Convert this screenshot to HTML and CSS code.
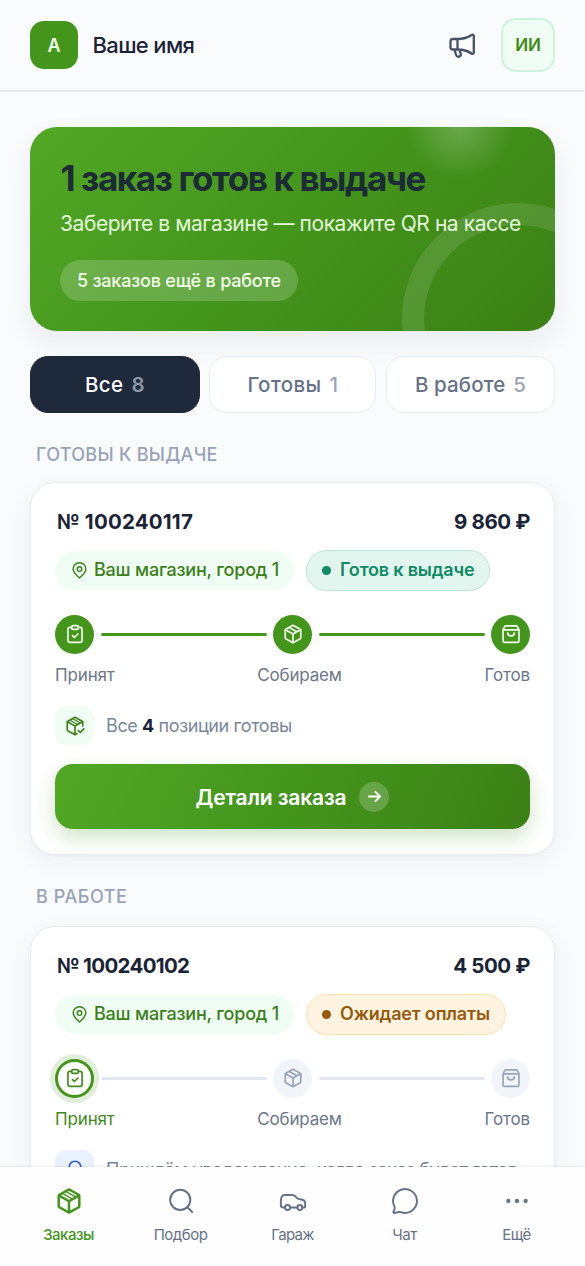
FILE: index.html
```
<!DOCTYPE html>
<html lang="ru">
<head>
<meta charset="utf-8">
<title>Заказы</title>
<link rel="stylesheet" href="styles.css">
</head>
<body>
<svg class="sprite" aria-hidden="true">
  <symbol id="clipboard" viewBox="0 0 24 24"><path d="M8 4H6A2.500 2.500 0 0 0 3.500 6.500V19.500A2.500 2.500 0 0 0 6 22h12a2.500 2.500 0 0 0 2.500-2.500V6.500A2.500 2.500 0 0 0 18 4H16"/><rect x="8" y="2" width="8" height="4.500" rx="1.800"/><path d="M9 14l2.200 2.200L15.500 12"/></symbol>
  <symbol id="box" viewBox="0 0 24 24"><path d="M12 1.500l8.700 4.800c.4.200.6.500.6 1v9.300c0 .5-.2.800-.6 1L12 22.500l-8.700-4.900c-.4-.2-.6-.5-.6-1V7.300c0-.5.2-.8.600-1z"/><path d="M3 7l9 5 9-5M12 12v10M7.500 4.200l9 5"/></symbol>
  <symbol id="box-striped" viewBox="0 0 24 24"><path d="M12 1.300l8.900 4.900c.4.200.6.500.6 1v9.600c0 .5-.2.800-.6 1L12 22.700l-8.900-4.900c-.4-.2-.6-.5-.6-1V7.200c0-.5.2-.8.600-1z"/><path d="M3 7l9 5.200 9-5.200M12 12.200v10"/><path class="thin" d="M9.300 3.300l8.700 4.900M6 5l8.800 5"/></symbol>
  <symbol id="box-check" viewBox="0 0 24 24"><path d="M21.300 12V7.300c0-.5-.2-.8-.6-1L12 1.500 3.300 6.300c-.4.200-.6.500-.6 1v9.300c0 .5.2.8.600 1L12 22.500l2.300-1.300"/><path d="M3 7l9 5 9-5M12 12v10M16 17.500l2.300 2.300 4.300-4.300"/><path class="thin" d="M9.300 3.300l8.700 4.900M6 5l8.800 5"/></symbol>
  <symbol id="bag" viewBox="0 0 24 24"><path d="M2.500 6.500L5 2.300h14L21.500 6.500V20a2 2 0 0 1-2 2h-15a2 2 0 0 1-2-2zM2.500 7h19M8 10.500c0 5 8 5 8 0"/></symbol>
  <symbol id="pin" viewBox="0 0 24 24"><path d="M12 22.500C8 19 3 15 3 10a9 9 0 0 1 18 0c0 5-5 9-9 12.500z"/><circle cx="12" cy="10" r="3.200"/></symbol>
</svg>

<header class="topbar">
  <div class="logo">А</div>
  <div class="name">Ваше имя</div>
  <svg class="megaphone" viewBox="0 0 28 28"><path d="M9.500 8h-4.500A2.500 2.500 0 0 0 2.500 10.500v5.500A2.500 2.500 0 0 0 5 18.500h4.500zM9.500 8c5.500 0 10-1.200 14-4 1-.7 2.300-.2 2.300 1v16.500c0 1.200-1.300 1.700-2.300 1-4-2.800-8.500-4-14-4M6.500 18.500l1.500 5.200c.5 1.600 1.600 2.300 3 2s2.200-1.500 1.700-3L11.500 18.700"/></svg>
  <div class="avatar">ИИ</div>
</header>

<main class="content">
  <section class="banner">
    <div class="glow"></div><div class="ring"></div>
    <h1 class="banner-title">1 заказ готов к выдаче</h1>
    <p class="banner-text">Заберите в магазине — покажите QR на кассе</p>
    <span class="banner-pill">5 заказов ещё в работе</span>
  </section>

  <div class="tabs">
    <div class="tab active"><span class="t-all">Все</span><span class="count">8</span></div>
    <div class="tab"><span class="t-ready">Готовы</span><span class="count">1</span></div>
    <div class="tab"><span class="t-work">В работе</span><span class="count">5</span></div>
  </div>

  <h2 class="section-title">ГОТОВЫ К ВЫДАЧЕ</h2>
  <article class="card">
    <div class="card-head"><span class="num-a">№ 100240117</span><span class="price">9 860 ₽</span></div>
    <div class="chips">
      <span class="shop"><svg class="i-pin"><use href="#pin"/></svg>Ваш магазин, город 1</span>
      <span class="status ready"><i class="dot"></i>Готов к выдаче</span>
    </div>
    <div class="steps">
      <span class="step done"><svg class="i-step"><use href="#clipboard"/></svg></span><span class="line done-line"></span>
      <span class="step done"><svg class="i-step"><use href="#box"/></svg></span><span class="line done-line"></span>
      <span class="step done"><svg class="i-step"><use href="#bag"/></svg></span>
    </div>
    <div class="labels"><span>Принят</span><span class="mid">Собираем</span><span class="end">Готов</span></div>
    <div class="info"><span class="tile"><svg class="i-step"><use href="#box-check"/></svg></span><span>Все <b>4</b> позиции готовы</span></div>
    <a class="button"><span class="button-text">Детали заказа</span><span class="arrow"><svg class="i-arrow" viewBox="0 0 16 16"><path d="M2 8h12M9 3l5 5-5 5"/></svg></span></a>
  </article>

  <h2 class="section-title second"><span class="wide">В РАБОТЕ</span></h2>
  <article class="card">
    <div class="card-head"><span class="num-b">№ 100240102</span><span class="price">4 500 ₽</span></div>
    <div class="chips">
      <span class="shop"><svg class="i-pin"><use href="#pin"/></svg>Ваш магазин, город 1</span>
      <span class="status waiting"><i class="dot"></i>Ожидает оплаты</span>
    </div>
    <div class="steps">
      <span class="step current"><svg class="i-step"><use href="#clipboard"/></svg></span><span class="line"></span>
      <span class="step"><svg class="i-step"><use href="#box"/></svg></span><span class="line"></span>
      <span class="step"><svg class="i-step"><use href="#bag"/></svg></span>
    </div>
    <div class="labels"><span class="green">Принят</span><span class="mid">Собираем</span><span class="end">Готов</span></div>
    <div class="info"><span class="tile blue"><svg class="i-step" viewBox="0 0 24 24"><path d="M5 17V8.500a7 7 0 0 1 14 0V17l2 2H3zM10 22h4"/></svg></span><span class="note">Пришлём уведомление, когда заказ будет готов</span></div>
  </article>
</main>

<nav class="bottom-nav">
  <a class="nav-item selected"><svg class="i-nav bold"><use href="#box-striped"/></svg><span>Заказы</span></a>
  <a class="nav-item"><svg class="i-nav" viewBox="0 0 24 24"><circle cx="11.300" cy="11" r="9.300"/><path d="M18 17.800l4.300 4.400"/></svg><span>Подбор</span></a>
  <a class="nav-item"><svg class="i-nav" viewBox="0 0 24 24"><path d="M4.500 18H2.500A2 2 0 0 1 .8 16v-3.500C.8 9 1.500 6.500 4.500 6.500h6.500c1.500 0 2.500.5 3.500 1.600l1.800 1.700 4.200 1c1.600.4 2.700 1.300 2.700 3V16.500c0 1-.6 1.500-1.500 1.500h-1M9.500 18h6.500"/><circle cx="7" cy="18" r="2.300"/><circle cx="18.300" cy="18" r="2.300"/></svg><span class="n-garage">Гараж</span></a>
  <a class="nav-item"><svg class="i-nav" viewBox="0 0 24 24"><path d="M12 23a11 11 0 1 0-9.700-5.800c.4.700.3 1.200.1 2L1.300 22c-.2.700.2 1.200.9 1.100l4.300-.9c.7-.2 1.100-.1 1.700.1 1.200.5 2.400.7 3.800.7z"/></svg><span>Чат</span></a>
  <a class="nav-item"><svg class="i-nav dots" viewBox="0 0 24 24"><circle cx="4" cy="12" r="2"/><circle cx="12" cy="12" r="2"/><circle cx="20" cy="12" r="2"/></svg><span>Ещё</span></a>
</nav>
</body>
</html>
```

FILE: styles.css
```
* { box-sizing: border-box; }
body {
  margin: 0;
  height: 1266px;
  overflow: hidden;
  display: flex;
  flex-direction: column;
  background: #f9fbfd;
  color: #1b2437;
  font-family: Inter, "Liberation Sans", sans-serif;
}
h1, h2, p { margin: 0; }
svg { fill: none; stroke: currentColor; stroke-width: 2; stroke-linecap: round; stroke-linejoin: round; flex: none; overflow: visible; }
.sprite { width: 0; height: 0; position: absolute; }
.thin { stroke-width: 1.400; }

.topbar {
  flex: none;
  height: 92px;
  border-bottom: 2px solid #e8ecef;
  padding: 0 30px;
  display: flex;
  align-items: center;
}
.logo {
  width: 48px; height: 48px;
  border-radius: 14px;
  background: #44951c;
  color: #f0ffe8;
  display: flex; align-items: center; justify-content: center;
  font-size: 18px; font-weight: 600;
}
.name { margin-left: 14.5px; flex: 1; font-size: 22px; font-weight: 500; letter-spacing: -.65px; }
.megaphone { width: 28px; height: 28px; margin-right: 25px; color: #475166; stroke-width: 2.300; }
.avatar {
  width: 54px; height: 54px;
  border: 2px solid #cdf3db;
  border-radius: 15px;
  background: #effdf4;
  color: #3f8a17;
  display: flex; align-items: center; justify-content: center;
  font-size: 17px; font-weight: 600; letter-spacing: -.2px;
}

.content { flex: 1; min-height: 0; overflow: hidden; padding: 35px 30px 0; }
.banner {
  position: relative;
  overflow: hidden;
  height: 204px;
  padding: 30px 31px;
  border-radius: 27px;
  background: linear-gradient(135deg, #52a825 0%, #44951c 50%, #3b8015 100%);
  box-shadow: 0 12px 28px rgba(30,41,59,.07);
}
.glow {
  position: absolute; left: 374px; top: -58px; width: 112px; height: 112px; border-radius: 50%;
  background: radial-gradient(circle, rgba(255,255,255,.22), rgba(255,255,255,0) 68%);
}
.ring {
  position: absolute; left: 372px; top: 76px; width: 232px; height: 232px;
  border: 22px solid rgba(255,255,255,.11); border-radius: 50%;
}
.banner-title { position: relative; margin-left: -.5px; font-size: 35px; line-height: 43px; font-weight: 700; letter-spacing: -1.39px; white-space: nowrap; color: #1c2b36; }
.banner-text { position: relative; margin: 9px 0 0 -1px; font-size: 21px; line-height: 30px; letter-spacing: -.44px; white-space: nowrap; color: #e2f8d8; }
.banner-pill {
  position: relative;
  display: flex; align-items: center; justify-content: center;
  width: 238px; height: 41px; margin-top: 21px; margin-left: -1px;
  border-radius: 21px;
  background: rgba(255,255,255,.19);
  color: #f1ffeb;
  font-size: 18px; font-weight: 500; letter-spacing: -.21px;
}

.tabs {
  position: relative;
  display: grid; grid-template-columns: 169.5px 167px 169px; justify-content: space-between;
  margin-top: 24.5px;
}
.tab {
  height: 57px;
  display: flex; align-items: center; justify-content: center; gap: 8px;
  border: 1.5px solid #e8ecf1; border-radius: 18px;
  background: #fff; color: #667287;
  font-size: 20.5px; font-weight: 500;
}
.tab.active { background: #1e293b; border-color: #1e293b; color: #fff; }
.count { color: #9aa4b4; }
.active .count { color: #8d97a6; font-weight: 600; }
.t-all { letter-spacing: .4px; }
.t-ready { letter-spacing: .4px; }
.t-work { letter-spacing: .1px; }

.section-title { height: 24px; margin: 30.5px 0 15px 6px; font-size: 18px; line-height: 24px; font-weight: 500; letter-spacing: .3px; color: #97a3b8; }
.section-title.second { margin-top: 30px; margin-bottom: 17px; }
.wide { letter-spacing: .55px; }

.card {
  height: 373px;
  padding: 21.5px 24px;
  border: 1.5px solid #e9edf2; border-radius: 25px;
  background: #fff;
  box-shadow: 0 6px 24px rgba(30,41,59,.05), 0 1px 3px rgba(30,41,59,.04);
}
.card-head { display: flex; justify-content: space-between; height: 34px; line-height: 34px; padding-left: 2px; font-size: 20.5px; font-weight: 700; }
.num-a { letter-spacing: .2px; }
.num-b { letter-spacing: -.68px; }
.price { letter-spacing: -.4px; }
.chips { display: flex; align-items: center; gap: 12px; height: 41px; margin-top: 11.5px; }
.shop {
  width: 239px; height: 39px; padding: 0 0 2px 16px;
  display: flex; align-items: center; gap: 6px;
  border-radius: 20px; background: #f0fdf4; color: #3b8018;
  font-size: 18px; font-weight: 500; letter-spacing: -.22px; white-space: nowrap;
}
.i-pin { width: 17px; height: 19px; margin-top: 2px; }
.status {
  height: 41px; padding: 0 15px 2px; display: flex; align-items: center;
  border: 1.5px solid; border-radius: 21px;
  font-size: 18px; font-weight: 600; letter-spacing: -.18px; white-space: nowrap;
}
.dot { width: 9px; height: 9px; margin: 2px 9px 0 0; border-radius: 50%; background: currentColor; }
.ready { background: #e2f6ef; border-color: #b8e6d6; color: #0e8a64; }
.waiting { background: #fff3e2; border-color: #fbe0b0; color: #965a0a; }

.steps { display: flex; align-items: center; justify-content: space-between; height: 40px; margin-top: 23px; }
.step {
  width: 39px; height: 39px; border-radius: 50%;
  display: flex; align-items: center; justify-content: center;
  background: #f1f5fa; color: #97a3b8;
}
.step.done { background: #44951c; color: #f4ffef; }
.step.current { border: 3px solid #44951c; background: #fff; color: #3f8a1a; box-shadow: 0 0 0 5px #e1eedc; }
.i-step { width: 20px; height: 20px; }
.line { width: 166px; height: 3px; border-radius: 2px; background: #e3e8f0; }
.done-line { background: #44951c; }
.labels { display: grid; grid-template-columns: 1fr 1fr 1fr; margin-top: 9px; height: 24px; line-height: 24px; font-size: 17px; letter-spacing: -.15px; color: #6b778b; }
.mid { text-align: center; padding-left: 14px; }
.end { text-align: right; }
.green { color: #3f8a1a; }

.info { display: flex; align-items: center; gap: 12px; height: 39px; margin-top: 19px; font-size: 18px; letter-spacing: -.38px; color: #7a869a; }
.info b { font-weight: 700; color: #1b2437; }
.tile { width: 39px; height: 39px; border-radius: 11px; display: flex; align-items: center; justify-content: center; background: #f0fdf4; color: #3b8018; }
.blue { background: #eaf1fe; color: #3157d5; }
.note { letter-spacing: -.4px; white-space: nowrap; }
.button {
  display: flex; align-items: center; justify-content: center; gap: 13px;
  height: 65px; margin-top: 19px; border-radius: 18px;
  background: linear-gradient(115deg, #52a825 0%, #44951c 50%, #3b8015 100%);
  box-shadow: 0 8px 20px rgba(68,149,28,.25);
  color: #fff; font-size: 21px; font-weight: 600; letter-spacing: -.14px;
}
.button-text { padding-top: 2px; }
.arrow { width: 30px; height: 30px; border-radius: 50%; background: rgba(255,255,255,.2); display: flex; align-items: center; justify-content: center; }
.i-arrow { width: 15px; height: 15px; }

.bottom-nav {
  position: relative;
  flex: none;
  display: grid; grid-template-columns: repeat(5, 112px); justify-content: center;
  height: 99px; padding: 21px 0 0;
  background: #fefefe;
  box-shadow: 0 -1px 2px rgba(30,41,59,.09);
  color: #667287; font-size: 15px; letter-spacing: -.5px;
}
.nav-item { display: flex; flex-direction: column; align-items: center; gap: 10px; line-height: 22px; }
.i-nav { width: 26px; height: 26px; stroke-width: 1.800; }
.i-nav.bold { stroke-width: 2.300; }
.dots { fill: currentColor; stroke: none; }
.selected { color: #44951c; font-weight: 500; }
.n-garage { letter-spacing: -.69px; }
```
